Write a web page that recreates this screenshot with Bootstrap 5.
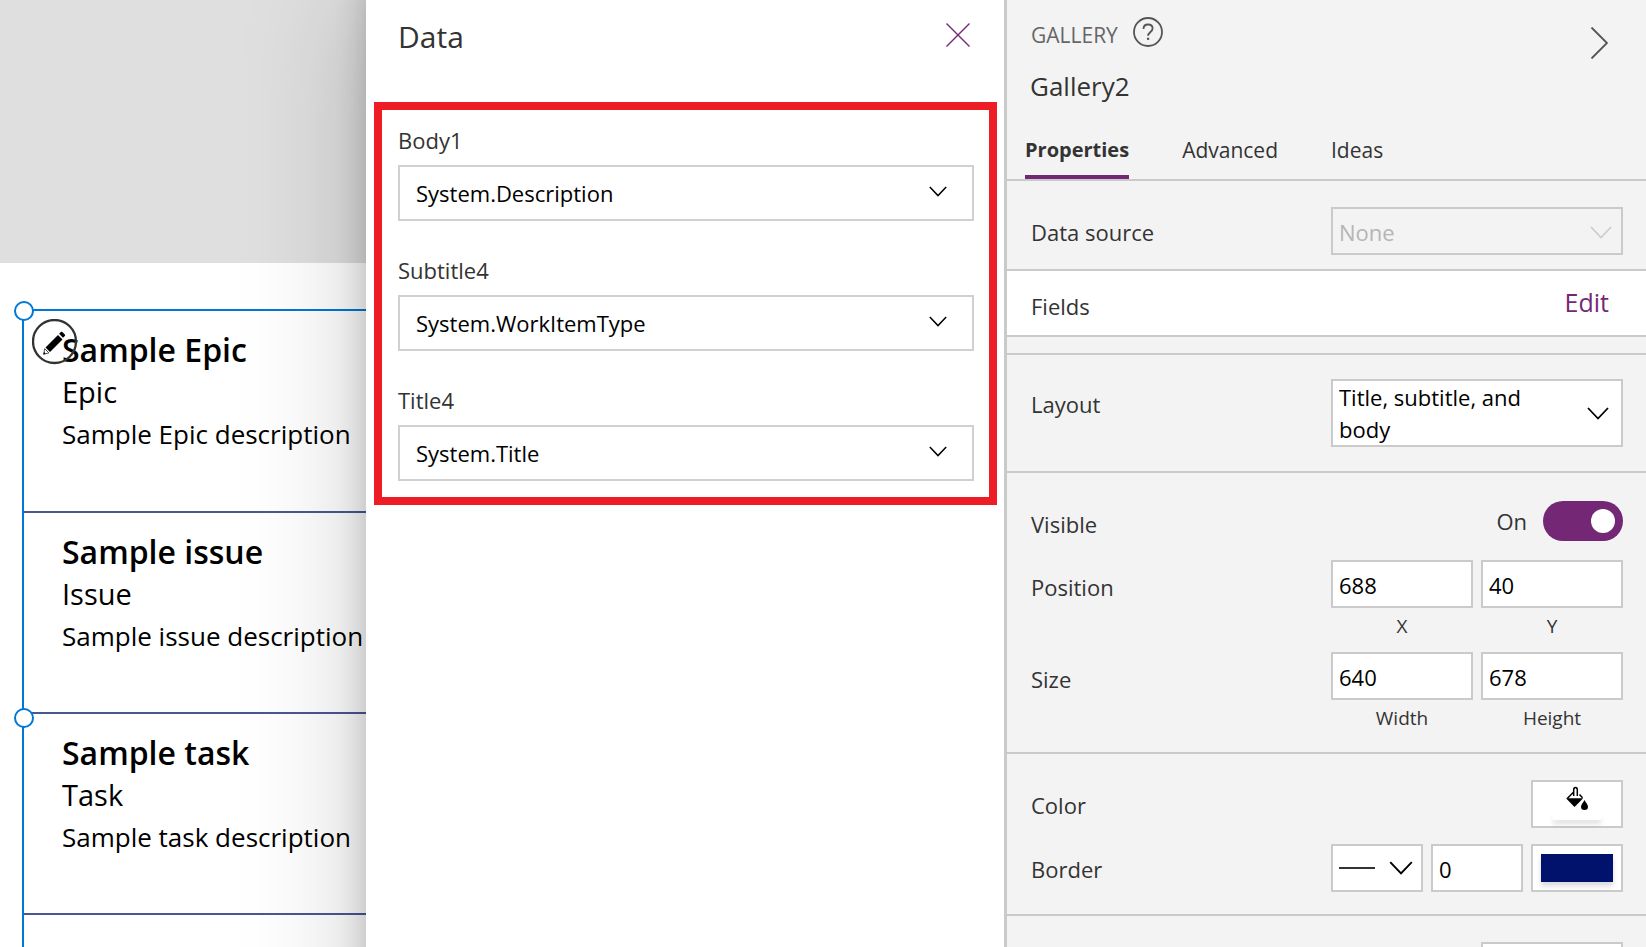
<!DOCTYPE html>
<html lang="en">
<head>
<meta charset="utf-8">
<meta name="viewport" content="width=device-width, initial-scale=1">
<title>Gallery2 - Data</title>
<link href="https://cdn.jsdelivr.net/npm/bootstrap@5.3.0/dist/css/bootstrap.min.css" rel="stylesheet">
<style>
  :root {
    --plum: #742774;
    --line: #cacaca;
    --ink: #333;
    --select-blue: #0078d4;
    --chevron: url("data:image/svg+xml,%3Csvg xmlns='http://www.w3.org/2000/svg' viewBox='0 0 22 13'%3E%3Cpath d='M1 1l10 10.5L21 1' fill='none' stroke='%23000' stroke-width='1.8'/%3E%3C/svg%3E");
    --chevron-muted: url("data:image/svg+xml,%3Csvg xmlns='http://www.w3.org/2000/svg' viewBox='0 0 22 13'%3E%3Cpath d='M1 1l10 10.5L21 1' fill='none' stroke='%23ccc' stroke-width='1.7'/%3E%3C/svg%3E");
    --solid-line: url("data:image/svg+xml,%3Csvg xmlns='http://www.w3.org/2000/svg' viewBox='0 0 36 2'%3E%3Cpath d='M0 1h36' stroke='%23333' stroke-width='2'/%3E%3C/svg%3E");
  }
  body { font-family: "Open Sans", "Noto Sans", sans-serif; font-size: 22px; line-height: 30px; color: var(--ink); }
  .studio { grid-template-columns: minmax(0, 366fr) minmax(0, 638fr) minmax(0, 642fr); }

  /* canvas */
  .canvas-top { height: 263px; background: #dfdfdf; }
  .gallery { margin: 46px 0 0 22px; border: solid var(--select-blue); border-width: 2px 0 0 2px; color: #000; white-space: nowrap; }
  .gallery-item { height: 201px; padding: 17px 0 0 38px; border-bottom: 2px solid #4a5796; }
  .gallery-item:first-child { height: 202px; }
  .item-title { font-size: 32px; font-weight: 600; line-height: 44px; margin: 0; }
  .item-subtitle { font-size: 29px; line-height: 40px; }
  .item-body { font-size: 26px; line-height: 44px; }
  .handle { width: 20px; height: 20px; left: -10px; background: #fff; border: 2px solid var(--select-blue); border-radius: 50%; }
  .handle-top { top: -10px; }
  .handle-mid { top: 397px; }
  .edit-badge { left: 8px; top: 8px; width: 46px; height: 46px; }

  /* data drawer */
  .drawer { z-index: 1; }
  .drawer::before { content: ""; position: absolute; inset: -30px 0 -120px; z-index: -1; background: #fff; box-shadow: 0 20px 115px rgba(0,0,0,.22), 0 10px 29px rgba(0,0,0,.18); }
  .drawer-head { height: 102px; padding: 17px 34px 0 32px; }
  .drawer-title { font-size: 30px; line-height: 40px; margin: 0; }
  .icon-btn { padding: 0; border: 0; line-height: 0; }
  .field-box { margin: 0 7px 0 8px; padding: 15px 15px 16px 16px; border: 8px solid #ee1c25; gap: 34px; }
  .field-box label { margin-bottom: 10px; }
  .field-select, .prop-select, .prop-input { font-size: 22px; line-height: 30px; color: #000; border: 2px solid var(--line); border-radius: 0; background-color: #fff; }
  .field-select { height: 56px; padding: 0 60px 0 16px; border-color: #d0d0d0; background-image: var(--chevron); background-size: 18px 11px; background-position: right 25px top 19px; }

  /* property panel */
  .props { z-index: 2; background: #f3f3f3; border-left: 3px solid var(--line); }
  .props-head { padding: 17px 23px 0; border-bottom: 2px solid var(--line); }
  .props-title { height: 51px; }
  .kind { font-size: 21px; color: #666; padding-top: 3px; margin-left: 1px; }
  .help-btn { margin-left: 15px; }
  .collapse-btn { margin: 10px 15px 0 auto; }
  .control-name { font-size: 26px; line-height: 36px; margin: 0; }
  .props-tabs { gap: 53px; margin: 31px 0 0 -5px; }
  .props-tabs .nav-link { font-size: 21px; color: var(--ink); padding: 0 0 10px; border-bottom: 4px solid transparent; }
  .props-tabs .nav-link.active { font-size: 20px; font-weight: 700; border-color: var(--plum); }
  .section { padding: 0 23px 0 24px; border-bottom: 2px solid var(--line); }
  .section-source { padding-top: 26px; padding-bottom: 14px; }
  .section-fields { height: 66px; background: #fff; }
  .section-gap { height: 18px; }
  .section-layout { padding-top: 24px; padding-bottom: 24px; }
  .section-place { padding-top: 24px; padding-bottom: 16px; }
  .section-look { padding-top: 26px; padding-bottom: 22px; }
  .prop-label { padding-top: 10px; }
  .section-place .prop-label { padding-top: 12px; }
  .switch-row { margin-bottom: 19px; }
  .controls { width: 292px; flex: none; gap: 8px; }
  .prop-select, .prop-input { height: 48px; padding: 1px 6px 0; }
  .prop-select { background-image: var(--chevron); background-size: 22px 13px; background-position: right 12px center; }
  .prop-select:disabled { color: #b5b5b5; background-color: #f3f3f3; background-image: var(--chevron-muted); background-position: right 9px top 17px; opacity: 1; }
  .layout-select { height: 68px; padding: 0 64px 0 6px; line-height: 32px; white-space: normal; }
  .edit-link { font-size: 25px; color: var(--plum); text-decoration: none; padding: 0 14px 3px 0; }
  .fields-label { padding-top: 6px; }
  .toggle.form-check-input { width: 80px; height: 40px; margin: 0 0 0 16px; float: none; border: 0; background-color: var(--plum); background-size: 40px 40px; background-position: right center;
    background-image: url("data:image/svg+xml,%3Csvg xmlns='http://www.w3.org/2000/svg' viewBox='0 0 40 40'%3E%3Ccircle cx='20' cy='20' r='12' fill='%23fff'/%3E%3C/svg%3E"); }
  .pair { flex: 1 1 0; min-width: 0; }
  .caption-label { font-size: 19px; line-height: 36px; text-align: center; display: block; }
  .swatch-btn { width: 92px; height: 48px; padding: 0; background: #fff; border: 2px solid var(--line); border-radius: 0; }
  .swatch-fill { width: 48px; height: 6px; background: #fff; box-shadow: 0 4px 5px rgba(0,0,0,.12); }
  .swatch-navy { width: 72px; height: 28px; background: #00126b; box-shadow: 0 4px 5px rgba(0,0,0,.15); }
  .style-select { width: 92px; background-image: var(--solid-line), var(--chevron); background-repeat: no-repeat; background-size: 36px 2px, 24px 14px; background-position: left 6px center, right 8px center; }
</style>
</head>
<body>
<div class="studio d-grid vh-100 overflow-hidden">

  <main class="overflow-hidden">
    <div class="canvas-top"></div>
    <div class="gallery position-relative">
      <article class="gallery-item">
        <h2 class="item-title">Sample Epic</h2>
        <div class="item-subtitle">Epic</div>
        <div class="item-body">Sample Epic description</div>
      </article>
      <article class="gallery-item">
        <h2 class="item-title">Sample issue</h2>
        <div class="item-subtitle">Issue</div>
        <div class="item-body">Sample issue description</div>
      </article>
      <article class="gallery-item">
        <h2 class="item-title">Sample task</h2>
        <div class="item-subtitle">Task</div>
        <div class="item-body">Sample task description</div>
      </article>
      <div class="gallery-item border-0"></div>
      <span class="handle handle-top position-absolute"></span>
      <span class="handle handle-mid position-absolute"></span>
      <button class="edit-badge icon-btn btn position-absolute" type="button" aria-label="Edit gallery">
        <svg width="46" height="46" viewBox="0 0 46 46">
          <circle cx="22.500" cy="22.500" r="21.500" fill="none" stroke="#333" stroke-width="2.300"/>
          <path d="M13.500 28.500l12.500-12.500 4.500 4.500L18 33z"/>
          <path d="M27.100 14.800l1.800-1.800c.5-.5 1-.5 1.500 0l2.400 2.400c.5.5.5 1 0 1.500l-1.800 1.800z"/>
          <path d="M12.700 29.700l4.200 4.200-5.200 1.400z" fill="#fff" stroke="#222" stroke-width=".8"/>
          <path d="M12.100 33l1.500 1.500-2.300.9z"/>
        </svg>
      </button>
    </div>
  </main>

  <aside class="drawer position-relative">
    <div class="drawer-head d-flex justify-content-between align-items-start">
      <h1 class="drawer-title fw-normal">Data</h1>
      <button class="icon-btn btn pt-1" type="button" aria-label="Close">
        <svg width="24" height="28" viewBox="0 0 24 28"><path d="M.5 2.500l23 23M23.500 2.500l-23 23" fill="none" stroke="#742774" stroke-width="1.400"/></svg>
      </button>
    </div>
    <form class="field-box d-flex flex-column">
      <div>
        <label class="d-block" for="body1">Body1</label>
        <select class="form-select field-select" id="body1"><option>System.Description</option></select>
      </div>
      <div>
        <label class="d-block" for="subtitle4">Subtitle4</label>
        <select class="form-select field-select" id="subtitle4"><option>System.WorkItemType</option></select>
      </div>
      <div>
        <label class="d-block" for="title4">Title4</label>
        <select class="form-select field-select" id="title4"><option>System.Title</option></select>
      </div>
    </form>
  </aside>

  <aside class="props position-relative overflow-hidden">
    <header class="props-head">
      <div class="props-title d-flex align-items-start">
        <span class="kind">GALLERY</span>
        <button class="icon-btn help-btn btn" type="button" aria-label="Help">
          <svg width="30" height="30" viewBox="0 0 30 30" fill="none" stroke="#555"><circle cx="15" cy="15" r="14" stroke-width="1.800"/><path d="M10.500 12c0-3 2-4.500 4.600-4.500s4.500 1.500 4.500 4c0 3.300-4.500 3.700-4.500 7.300" stroke-width="1.800"/><path d="M14 21.800h2.200" stroke-width="2.200"/></svg>
        </button>
        <button class="icon-btn collapse-btn btn" type="button" aria-label="Collapse panel">
          <svg width="18" height="32" viewBox="0 0 18 32"><path d="M1.500 .500l15.500 15.500-15.500 15.500" fill="none" stroke="#555" stroke-width="1.900"/></svg>
        </button>
      </div>
      <h2 class="control-name fw-normal">Gallery2</h2>
      <nav class="nav props-tabs">
        <a class="nav-link active" href="#properties" aria-current="page">Properties</a>
        <a class="nav-link" href="#advanced">Advanced</a>
        <a class="nav-link" href="#ideas">Ideas</a>
      </nav>
    </header>

    <section class="section section-source d-flex justify-content-between align-items-start" id="properties">
      <label class="prop-label" for="source">Data source</label>
      <div class="controls"><select class="form-select prop-select" id="source" disabled><option>None</option></select></div>
    </section>

    <section class="section section-fields d-flex justify-content-between align-items-center">
      <span class="fields-label">Fields</span>
      <a class="edit-link" href="#fields">Edit</a>
    </section>
    <div class="section section-gap"></div>

    <section class="section section-layout d-flex justify-content-between align-items-start">
      <label class="prop-label" for="layout">Layout</label>
      <div class="controls"><select class="form-select prop-select layout-select" id="layout"><option>Title, subtitle, and body</option></select></div>
    </section>

    <section class="section section-place">
      <div class="switch-row d-flex justify-content-between align-items-start">
        <label class="prop-label" for="visible">Visible</label>
        <div class="form-switch d-flex align-items-center p-0 pt-1">
          <span>On</span>
          <input class="form-check-input toggle" type="checkbox" role="switch" id="visible" checked>
        </div>
      </div>
      <div class="d-flex justify-content-between align-items-start">
        <span class="prop-label">Position</span>
        <div class="controls d-flex">
          <div class="pair"><input class="form-control prop-input" id="pos-x" value="688"><label class="caption-label" for="pos-x">X</label></div>
          <div class="pair"><input class="form-control prop-input" id="pos-y" value="40"><label class="caption-label" for="pos-y">Y</label></div>
        </div>
      </div>
      <div class="d-flex justify-content-between align-items-start mt-2">
        <span class="prop-label">Size</span>
        <div class="controls d-flex">
          <div class="pair"><input class="form-control prop-input" id="size-w" value="640"><label class="caption-label" for="size-w">Width</label></div>
          <div class="pair"><input class="form-control prop-input" id="size-h" value="678"><label class="caption-label" for="size-h">Height</label></div>
        </div>
      </div>
    </section>

    <section class="section section-look">
      <div class="d-flex justify-content-between align-items-start">
        <span class="prop-label">Color</span>
        <button class="swatch-btn d-flex flex-column align-items-center" type="button" aria-label="Fill color">
          <svg class="mt-1 mb-1" width="24" height="24" viewBox="0 0 24 24">
            <path d="M8.700 10V3.800c0-3 3.600-3 3.600 0v6.200M8.700 6l-6.500 6.500M14.500 8.500l3 3.200" fill="none" stroke="#000" stroke-width="1.500"/>
            <path d="M1 12.200h17.200L9.500 21z"/>
            <path d="M19.500 14c1.400 2.800 3.500 4.500 3.500 6.800a3.500 3.200 0 0 1-7 0c0-2.300 2.100-4 3.500-6.800z"/>
          </svg>
          <span class="swatch-fill"></span>
        </button>
      </div>
      <div class="d-flex justify-content-between align-items-start mt-3">
        <span class="prop-label">Border</span>
        <div class="controls d-flex">
          <select class="form-select prop-select style-select" aria-label="Border style"><option value="solid"></option></select>
          <input class="form-control prop-input pair" aria-label="Border thickness" value="0">
          <button class="swatch-btn d-flex align-items-center justify-content-center" type="button" aria-label="Border color"><span class="swatch-navy"></span></button>
        </div>
      </div>
    </section>

    <section class="section section-source border-0 d-flex justify-content-end">
      <div class="controls d-flex">
        <div class="pair"></div>
        <div class="pair"><input class="form-control prop-input" aria-label="Padding"></div>
      </div>
    </section>
  </aside>
</div>
<script src="https://cdn.jsdelivr.net/npm/bootstrap@5.3.0/dist/js/bootstrap.bundle.min.js"></script>
</body>
</html>
